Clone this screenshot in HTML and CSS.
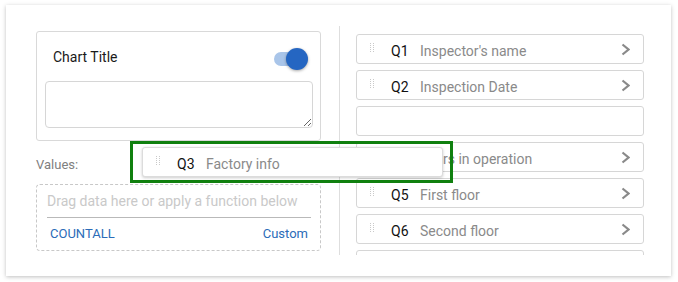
FILE: index.html
```html
<!DOCTYPE html>
<html>
<head>
<meta charset="utf-8">
<link rel="stylesheet" href="styles.css">
</head>
<body>
<div class="panel">
  <div class="left">
    <div class="title-card">
      <div class="title-row">
        <span class="title-text">Chart Title</span>
        <span class="toggle"><span class="track"></span><span class="thumb"></span></span>
      </div>
      <textarea class="title-input"></textarea>
    </div>
    <div class="values-label">Values:</div>
    <div class="dropzone">
      <div class="placeholder">Drag data here or apply a function below</div>
      <div class="links"><span>COUNTALL</span><span>Custom</span></div>
    </div>
  </div>
  <div class="right">
    <div class="row"><svg class="handle" width="4" height="9" viewBox="0 0 4 9"><g fill="#c9c9c9"><rect x="0" y="0" width="1" height="1"/><rect x="3" y="0" width="1" height="1"/><rect x="0" y="2" width="1" height="1"/><rect x="3" y="2" width="1" height="1"/><rect x="0" y="4" width="1" height="1"/><rect x="3" y="4" width="1" height="1"/><rect x="0" y="6" width="1" height="1"/><rect x="3" y="6" width="1" height="1"/><rect x="0" y="8" width="1" height="1"/><rect x="3" y="8" width="1" height="1"/></g></svg><span class="q">Q1</span><span class="label">Inspector's name</span><svg class="chev" width="9" height="13" viewBox="0 0 9 13"><polyline points="1.5,1.5 7.5,6.5 1.5,11.5" fill="none" stroke="#8a8a8a" stroke-width="2.2"/></svg></div>
    <div class="row"><svg class="handle" width="4" height="9" viewBox="0 0 4 9"><g fill="#c9c9c9"><rect x="0" y="0" width="1" height="1"/><rect x="3" y="0" width="1" height="1"/><rect x="0" y="2" width="1" height="1"/><rect x="3" y="2" width="1" height="1"/><rect x="0" y="4" width="1" height="1"/><rect x="3" y="4" width="1" height="1"/><rect x="0" y="6" width="1" height="1"/><rect x="3" y="6" width="1" height="1"/><rect x="0" y="8" width="1" height="1"/><rect x="3" y="8" width="1" height="1"/></g></svg><span class="q">Q2</span><span class="label">Inspection Date</span><svg class="chev" width="9" height="13" viewBox="0 0 9 13"><polyline points="1.5,1.5 7.5,6.5 1.5,11.5" fill="none" stroke="#8a8a8a" stroke-width="2.2"/></svg></div>
    <div class="row empty"></div>
    <div class="row"><svg class="handle" width="4" height="9" viewBox="0 0 4 9"><g fill="#c9c9c9"><rect x="0" y="0" width="1" height="1"/><rect x="3" y="0" width="1" height="1"/><rect x="0" y="2" width="1" height="1"/><rect x="3" y="2" width="1" height="1"/><rect x="0" y="4" width="1" height="1"/><rect x="3" y="4" width="1" height="1"/><rect x="0" y="6" width="1" height="1"/><rect x="3" y="6" width="1" height="1"/><rect x="0" y="8" width="1" height="1"/><rect x="3" y="8" width="1" height="1"/></g></svg><span class="q">Q4</span><span class="label">Years in operation</span><svg class="chev" width="9" height="13" viewBox="0 0 9 13"><polyline points="1.5,1.5 7.5,6.5 1.5,11.5" fill="none" stroke="#8a8a8a" stroke-width="2.2"/></svg></div>
    <div class="row"><svg class="handle" width="4" height="9" viewBox="0 0 4 9"><g fill="#c9c9c9"><rect x="0" y="0" width="1" height="1"/><rect x="3" y="0" width="1" height="1"/><rect x="0" y="2" width="1" height="1"/><rect x="3" y="2" width="1" height="1"/><rect x="0" y="4" width="1" height="1"/><rect x="3" y="4" width="1" height="1"/><rect x="0" y="6" width="1" height="1"/><rect x="3" y="6" width="1" height="1"/><rect x="0" y="8" width="1" height="1"/><rect x="3" y="8" width="1" height="1"/></g></svg><span class="q">Q5</span><span class="label">First floor</span><svg class="chev" width="9" height="13" viewBox="0 0 9 13"><polyline points="1.5,1.5 7.5,6.5 1.5,11.5" fill="none" stroke="#8a8a8a" stroke-width="2.2"/></svg></div>
    <div class="row"><svg class="handle" width="4" height="9" viewBox="0 0 4 9"><g fill="#c9c9c9"><rect x="0" y="0" width="1" height="1"/><rect x="3" y="0" width="1" height="1"/><rect x="0" y="2" width="1" height="1"/><rect x="3" y="2" width="1" height="1"/><rect x="0" y="4" width="1" height="1"/><rect x="3" y="4" width="1" height="1"/><rect x="0" y="6" width="1" height="1"/><rect x="3" y="6" width="1" height="1"/><rect x="0" y="8" width="1" height="1"/><rect x="3" y="8" width="1" height="1"/></g></svg><span class="q">Q6</span><span class="label">Second floor</span><svg class="chev" width="9" height="13" viewBox="0 0 9 13"><polyline points="1.5,1.5 7.5,6.5 1.5,11.5" fill="none" stroke="#8a8a8a" stroke-width="2.2"/></svg></div>
    <div class="row empty"></div>
  </div>
</div>
<div class="drag-frame">
  <div class="row drag-item"><svg class="handle" width="4" height="9" viewBox="0 0 4 9"><g fill="#c9c9c9"><rect x="0" y="0" width="1" height="1"/><rect x="3" y="0" width="1" height="1"/><rect x="0" y="2" width="1" height="1"/><rect x="3" y="2" width="1" height="1"/><rect x="0" y="4" width="1" height="1"/><rect x="3" y="4" width="1" height="1"/><rect x="0" y="6" width="1" height="1"/><rect x="3" y="6" width="1" height="1"/><rect x="0" y="8" width="1" height="1"/><rect x="3" y="8" width="1" height="1"/></g></svg><span class="q">Q3</span><span class="label">Factory info</span></div>
</div>
</body>
</html>
```

FILE: styles.css
```css
* { box-sizing: border-box; }
html, body { margin: 0; padding: 0; background: #fff; }
body {
  font-family: Roboto, "Noto Sans", sans-serif;
  position: relative;
  width: 678px;
  height: 282px;
  overflow: hidden;
}
.panel {
  position: relative;
  margin: 5px 0 0 6px;
  width: 665px;
  height: 271px;
  background: #fff;
  box-shadow: 0 1px 4px rgba(0,0,0,0.25);
  display: flex;
  align-items: flex-start;
  padding: 21px 0 0 30px;
}
.left {
  width: 285px;
  margin-top: 5px;
  margin-right: 18px;
}
.title-card {
  border: 1px solid #d9d9d9;
  border-radius: 3px;
  height: 110px;
  padding: 0 7px 0 8px;
}
.title-row {
  height: 49px;
  display: flex;
  align-items: center;
  justify-content: space-between;
  padding: 0 5px 0 8px;
}
.title-text {
  font-size: 14px;
  color: #1a1a1a;
}
.toggle {
  position: relative;
  width: 34px;
  height: 22px;
  display: block;
  margin-top: 4px;
}
.track {
  position: absolute;
  left: 0;
  top: 4px;
  width: 30px;
  height: 14px;
  border-radius: 7px;
  background: #a9c5e9;
}
.thumb {
  position: absolute;
  right: 0;
  top: 0;
  width: 22px;
  height: 22px;
  border-radius: 50%;
  background: #2566c2;
  box-shadow: 0 1px 3px rgba(0,0,0,0.35);
}
.title-input {
  display: block;
  width: 268px;
  height: 47px;
  border: 1px solid #d6d6d6;
  border-radius: 4px;
  margin: 0;
  padding: 4px;
  font-family: inherit;
  outline: none;
}
.values-label {
  margin-top: 16px;
  font-size: 13px;
  line-height: 16px;
  color: #808080;
}
.dropzone {
  margin-top: 11px;
  height: 67px;
  border: 1px dashed #c8c8c8;
  border-radius: 4px;
  padding: 7px 9px 0 10px;
}
.placeholder {
  font-size: 14px;
  line-height: 18px;
  color: #c9c9c9;
  white-space: nowrap;
  padding-bottom: 7px;
  border-bottom: 1px solid #b9b9b9;
}
.links {
  display: flex;
  justify-content: space-between;
  padding: 0 3px;
  margin-top: 7px;
  font-size: 13px;
  line-height: 18px;
  color: #2b6cb8;
}
.right {
  width: 305px;
  height: 229px;
  border-left: 1px solid #dedede;
  padding: 8px 0 0 16px;
  overflow: hidden;
  display: flex;
  flex-direction: column;
  gap: 6px;
}
.row {
  flex: none;
  width: 288px;
  height: 30px;
  border: 1px solid #d6d6d6;
  border-radius: 3px;
  background: #fff;
  display: flex;
  align-items: center;
  padding: 3px 13px 0 13px;
  font-size: 14px;
}
.handle {
  display: block;
  margin-top: -6px;
  flex: none;
}
.q {
  margin-left: 17px;
  width: 29px;
  color: #111;
  flex: none;
}
.label {
  color: #8a8a8a;
  flex: 1;
  white-space: nowrap;
}
.chev { display: block; flex: none; margin-top: -2px; }
.drag-frame {
  position: absolute;
  left: 130px;
  top: 141px;
  width: 323px;
  height: 42px;
  border: 3px solid #10800f;
  padding: 3px 0 0 9px;
}
.drag-item {
  width: 301px;
  border-color: #dcdcdc;
  box-shadow: 0 1px 3px rgba(0,0,0,0.2);
}
```
